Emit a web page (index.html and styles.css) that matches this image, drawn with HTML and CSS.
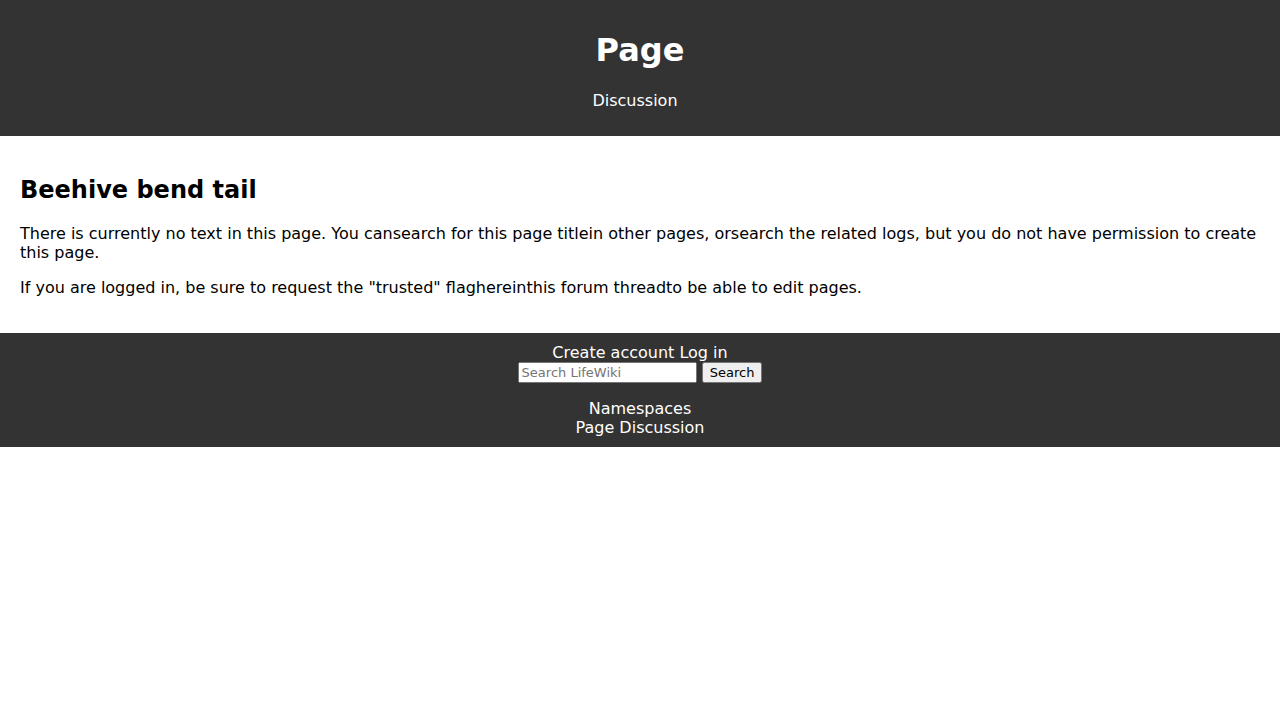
FILE: index.html
```
<!DOCTYPE html>
<html lang="en">
<head>
<meta charset="utf-8">
<title>Beehive bend tail</title>
<link rel="stylesheet" href="styles.css">
</head>
<body>
<header class="site-header">
  <h1>Page</h1>
  <nav class="tabs"><a class="tab" href="#discussion">Discussion</a></nav>
</header>
<main class="content">
  <h2>Beehive bend tail</h2>
  <p>There is currently no text in this page. You can<a href="#search">search for this page title</a>in other pages, or<a href="#logs">search the related logs</a>, but you do not have permission to create this page.</p>
  <p>If you are logged in, be sure to request the "trusted" flag<a href="#here">here</a>in<a href="#thread">this forum thread</a>to be able to edit pages.</p>
</main>
<footer class="site-footer">
  <div><a href="#create">Create account</a> <a href="#login">Log in</a></div>
  <form class="search">
    <input type="text" placeholder="Search LifeWiki" aria-label="Search LifeWiki">
    <button type="submit">Search</button>
  </form>
  <div>Namespaces</div>
  <div><a href="#page">Page</a> <a href="#discussion">Discussion</a></div>
</footer>
</body>
</html>
```
FILE: styles.css
```
body {
  margin: 0;
  font-family: "DejaVu Sans", sans-serif;
  color: #000;
  background: #fff;
}

a {
  color: inherit;
  text-decoration: none;
}

.site-header {
  padding: 10px;
  background: #333;
  color: #fff;
  text-align: center;
}

.tabs {
  padding-bottom: 16px;
}

.tab {
  margin-right: 10px;
}

.content {
  padding: 20px;
}

.site-footer {
  padding: 10px;
  background: #333;
  color: #fff;
  text-align: center;
}

.search {
  margin-bottom: 16px;
}

.search input,
.search button {
  box-sizing: border-box;
  height: 21px;
  font-family: inherit;
  font-size: 13px;
}

.search input {
  width: 179px;
}
```
